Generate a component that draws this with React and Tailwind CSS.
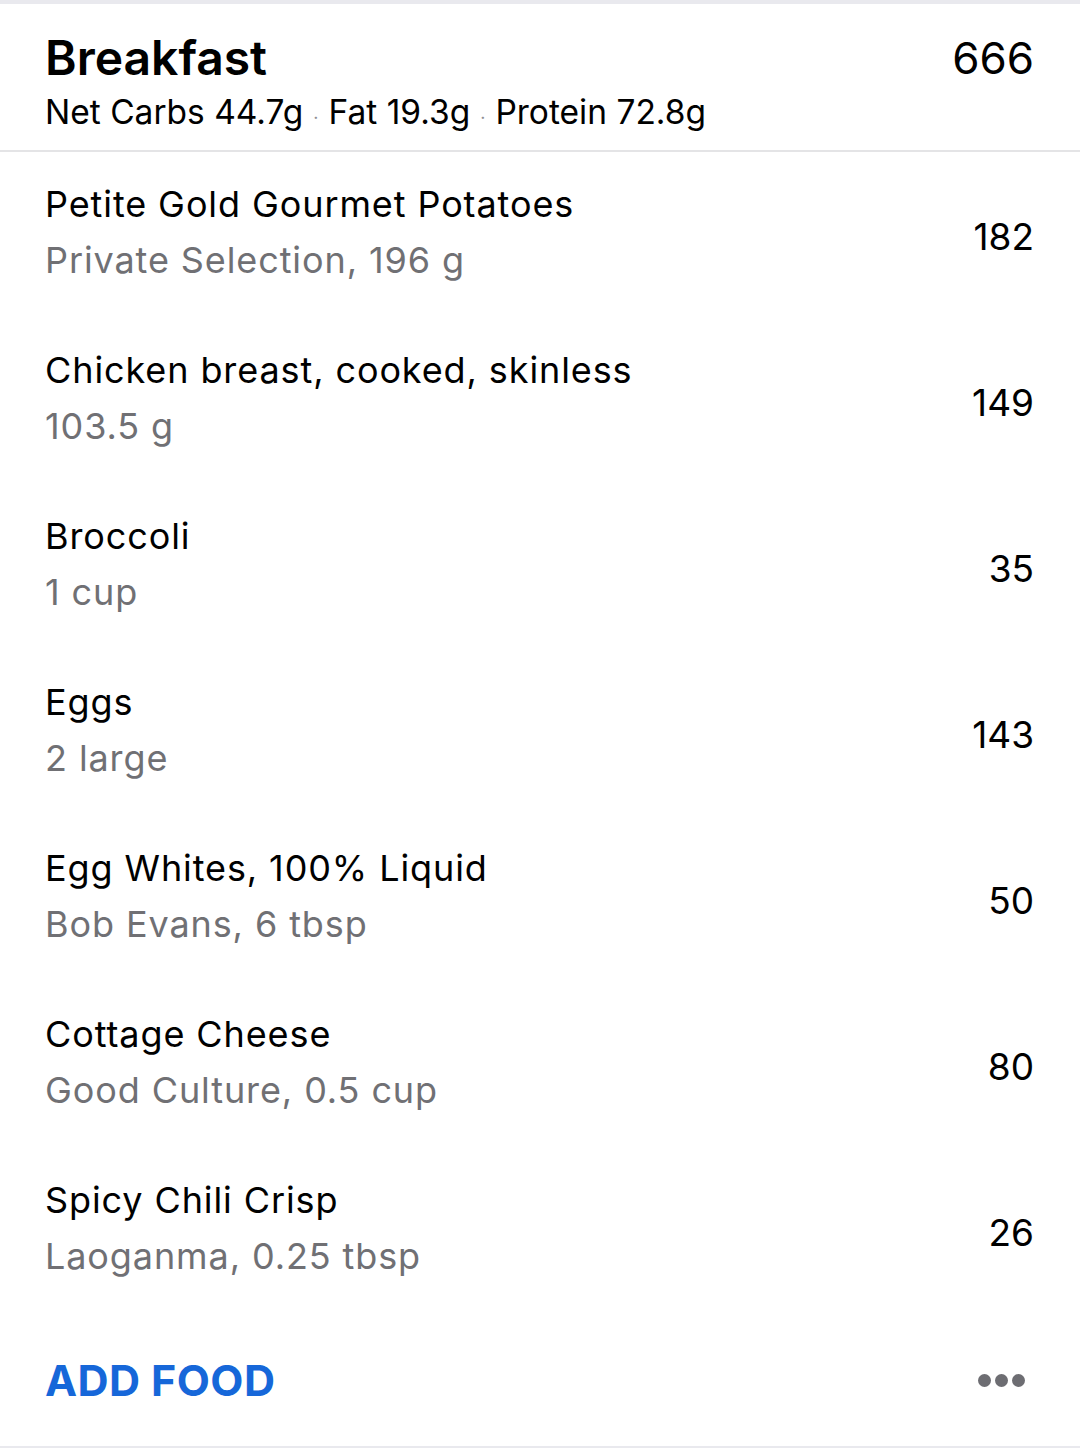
import React from "react";

const foods = [
  { name: "Petite Gold Gourmet Potatoes", detail: "Private Selection, 196 g", cal: 182 },
  { name: "Chicken breast, cooked, skinless", detail: "103.5 g", cal: 149 },
  { name: "Broccoli", detail: "1 cup", cal: 35 },
  { name: "Eggs", detail: "2 large", cal: 143 },
  { name: "Egg Whites, 100% Liquid", detail: "Bob Evans, 6 tbsp", cal: 50 },
  { name: "Cottage Cheese", detail: "Good Culture, 0.5 cup", cal: 80 },
  { name: "Spicy Chili Crisp", detail: "Laoganma, 0.25 tbsp", cal: 26 },
];

const Dot = () => <span className="text-[#8e8e93] text-[18px] px-[10px]">·</span>;

const FoodRow = ({ food }) => (
  <div className="h-[166px] flex items-center justify-between pl-[45px] pr-[46px]">
    <div className="flex flex-col mb-[6px]">
      <span className="text-[36px] leading-[56px] tracking-[0.025em] text-black">{food.name}</span>
      <span className="text-[36px] leading-[56px] tracking-[0.025em] text-[#707074]">{food.detail}</span>
    </div>
    <span className="text-[37px] leading-[56px] text-black mt-[4px]">{food.cal}</span>
  </div>
);

const App = () => {
  return (
    <div
      className="w-[1080px] h-[1448px] bg-white border-t-4 border-b-2 border-[#e9e9ee] flex flex-col"
      style={{ fontFamily: "Inter, 'Noto Sans', sans-serif" }}
    >
      {/* Meal header */}
      <div className="h-[148px] border-b-2 border-[#e4e4e6] pl-[45px] pr-[46px] pt-[26px] flex justify-between">
        <div className="flex flex-col">
          <span className="text-[48px] leading-[56px] font-semibold text-black">Breakfast</span>
          <span className="text-[33.5px] leading-[52px] text-black">
            Net Carbs 44.7g
            <Dot />
            Fat 19.3g
            <Dot />
            Protein 72.8g
          </span>
        </div>
        <span className="text-[44px] leading-[56px] text-black">666</span>
      </div>

      {/* Food list */}
      <div className="flex flex-col">
        {foods.map((food) => (
          <FoodRow key={food.name} food={food} />
        ))}
      </div>

      {/* Footer */}
      <div className="flex-1 flex items-center justify-between pl-[45px] pr-[46px]">
        <span className="text-[43px] font-bold tracking-[0.01em] text-[#1667d9]">ADD FOOD</span>
        <div className="flex gap-[4px] mr-[9px]">
          <span className="w-[13px] h-[13px] rounded-full bg-[#6d6d72]"></span>
          <span className="w-[13px] h-[13px] rounded-full bg-[#6d6d72]"></span>
          <span className="w-[13px] h-[13px] rounded-full bg-[#6d6d72]"></span>
        </div>
      </div>
    </div>
  );
};

export default App;
